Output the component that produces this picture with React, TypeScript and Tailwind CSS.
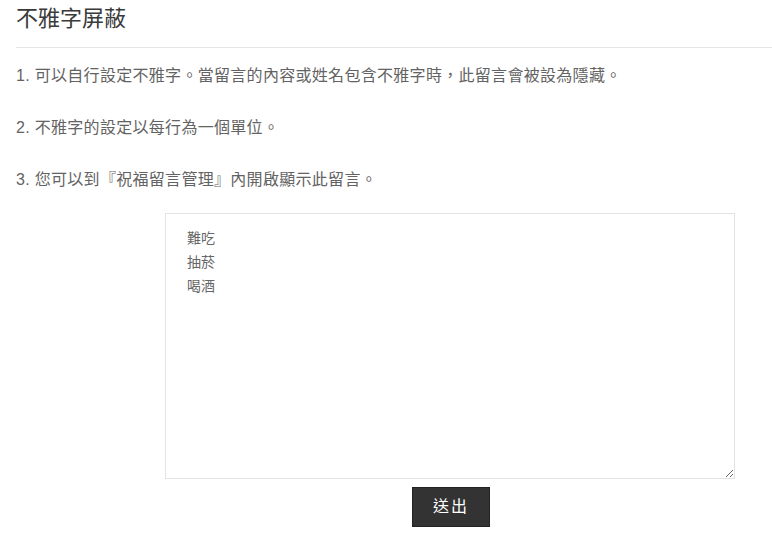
import React, { useState } from 'react';

const rules = [
  '1. 可以自行設定不雅字。當留言的內容或姓名包含不雅字時，此留言會被設為隱藏。',
  '2. 不雅字的設定以每行為一個單位。',
  '3. 您可以到『祝福留言管理』內開啟顯示此留言。',
];

const App: React.FC = () => {
  const [words, setWords] = useState('難吃\n抽菸\n喝酒');

  return (
    <div className="min-h-screen bg-white pl-4 font-['Liberation_Sans','Noto_Sans_CJK_TC',sans-serif]">
      {/* Title */}
      <h2 className="pt-[4px] pb-[13px] text-[22px] leading-[30px] font-normal text-[#3a3a3a] border-b border-[#e6e6e6]">
        不雅字屏蔽
      </h2>

      {/* Notes */}
      <div className="mt-[15px] flex flex-col gap-[26px]">
        {rules.map((r, i) => (
          <p key={i} className="text-[16px] leading-[26px] tracking-[0.3px] text-[#636363]">
            {r}
          </p>
        ))}
      </div>

      {/* Form */}
      <div className="mt-[20px] ml-[149px] w-[570px] flex flex-col items-center">
        <textarea
          value={words}
          onChange={e => setWords(e.target.value)}
          className="block w-[570px] h-[266px] border border-[#e3e3e3] pl-[21px] pr-[21px] pt-[12px] text-[14px] leading-[24px] text-[#666] outline-none font-['Liberation_Sans','Noto_Sans_CJK_TC',sans-serif]"
        />
        <button className="mt-[8px] ml-[2px] w-[78px] h-[40px] bg-[#333] border border-[#222] text-white text-[16px] tracking-[2px]">
          送出
        </button>
      </div>
    </div>
  );
};

export default App;
